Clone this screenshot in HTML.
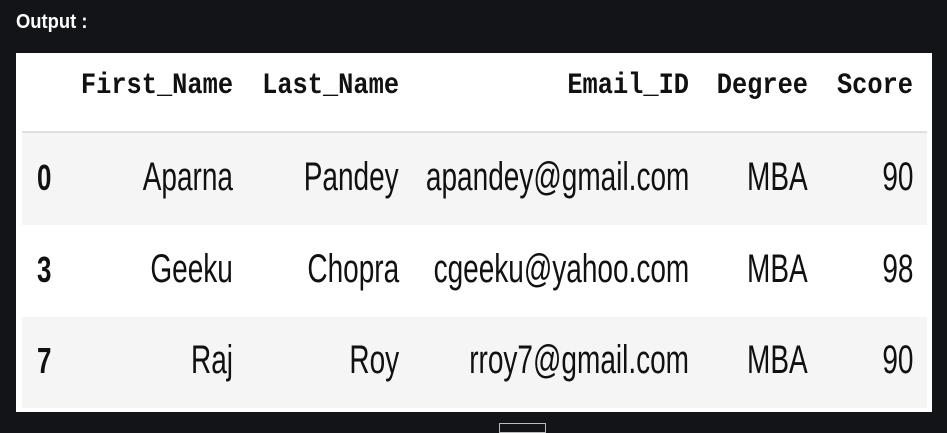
<!DOCTYPE html>
<html><head><style>
html,body{margin:0;padding:0;}
body{width:947px;height:425px;background:#131417;position:relative;overflow:hidden;}
.t{position:absolute;white-space:nowrap;}
.out{left:16px;top:11px;color:#fff;font:bold 20px "Liberation Sans",sans-serif;transform:scaleX(0.92);transform-origin:left;}
.panel{position:absolute;left:16px;top:53px;width:916px;height:359px;background:#fff;}
.row{position:absolute;left:22px;width:905px;}
.h{font:bold 30px "Liberation Mono",monospace;color:#111;transform:scaleX(0.845);transform-origin:right center;}
.d{font:40px "Liberation Sans",sans-serif;color:#111;transform:scaleX(0.70);transform-origin:right center;}
.i{font:bold 36px "Liberation Sans",sans-serif;color:#111;transform:scaleX(0.72);transform-origin:left center;}
.box{position:absolute;left:499px;top:423px;width:47px;height:10px;border:1px solid #bbb;box-sizing:border-box;}
</style></head><body>
<div class="t out">Output :</div>
<div class="panel"></div>
<div class="row" style="top:131px;height:2px;background:#e0e0e0"></div>
<div class="row" style="top:133px;height:92px;background:#f5f5f5"></div>
<div class="row" style="top:317px;height:91px;background:#f5f5f5"></div>

<div class="t h" style="right:714px;top:69px">First_Name</div>
<div class="t h" style="right:548px;top:69px">Last_Name</div>
<div class="t h" style="right:258px;top:69px">Email_ID</div>
<div class="t h" style="right:139px;top:69px">Degree</div>
<div class="t h" style="right:34px;top:69px">Score</div>

<div class="t i" style="left:37px;top:157px">0</div>
<div class="t d" style="right:714px;top:155px">Aparna</div>
<div class="t d" style="right:548px;top:155px">Pandey</div>
<div class="t d" style="right:258px;top:155px">apandey@gmail.com</div>
<div class="t d" style="right:139px;top:155px">MBA</div>
<div class="t d" style="right:34px;top:155px">90</div>

<div class="t i" style="left:37px;top:249px">3</div>
<div class="t d" style="right:714px;top:247px">Geeku</div>
<div class="t d" style="right:548px;top:247px">Chopra</div>
<div class="t d" style="right:258px;top:247px">cgeeku@yahoo.com</div>
<div class="t d" style="right:139px;top:247px">MBA</div>
<div class="t d" style="right:34px;top:247px">98</div>

<div class="t i" style="left:37px;top:340px">7</div>
<div class="t d" style="right:714px;top:338px">Raj</div>
<div class="t d" style="right:548px;top:338px">Roy</div>
<div class="t d" style="right:258px;top:338px">rroy7@gmail.com</div>
<div class="t d" style="right:139px;top:338px">MBA</div>
<div class="t d" style="right:34px;top:338px">90</div>

<div class="box"></div>
</body></html>
